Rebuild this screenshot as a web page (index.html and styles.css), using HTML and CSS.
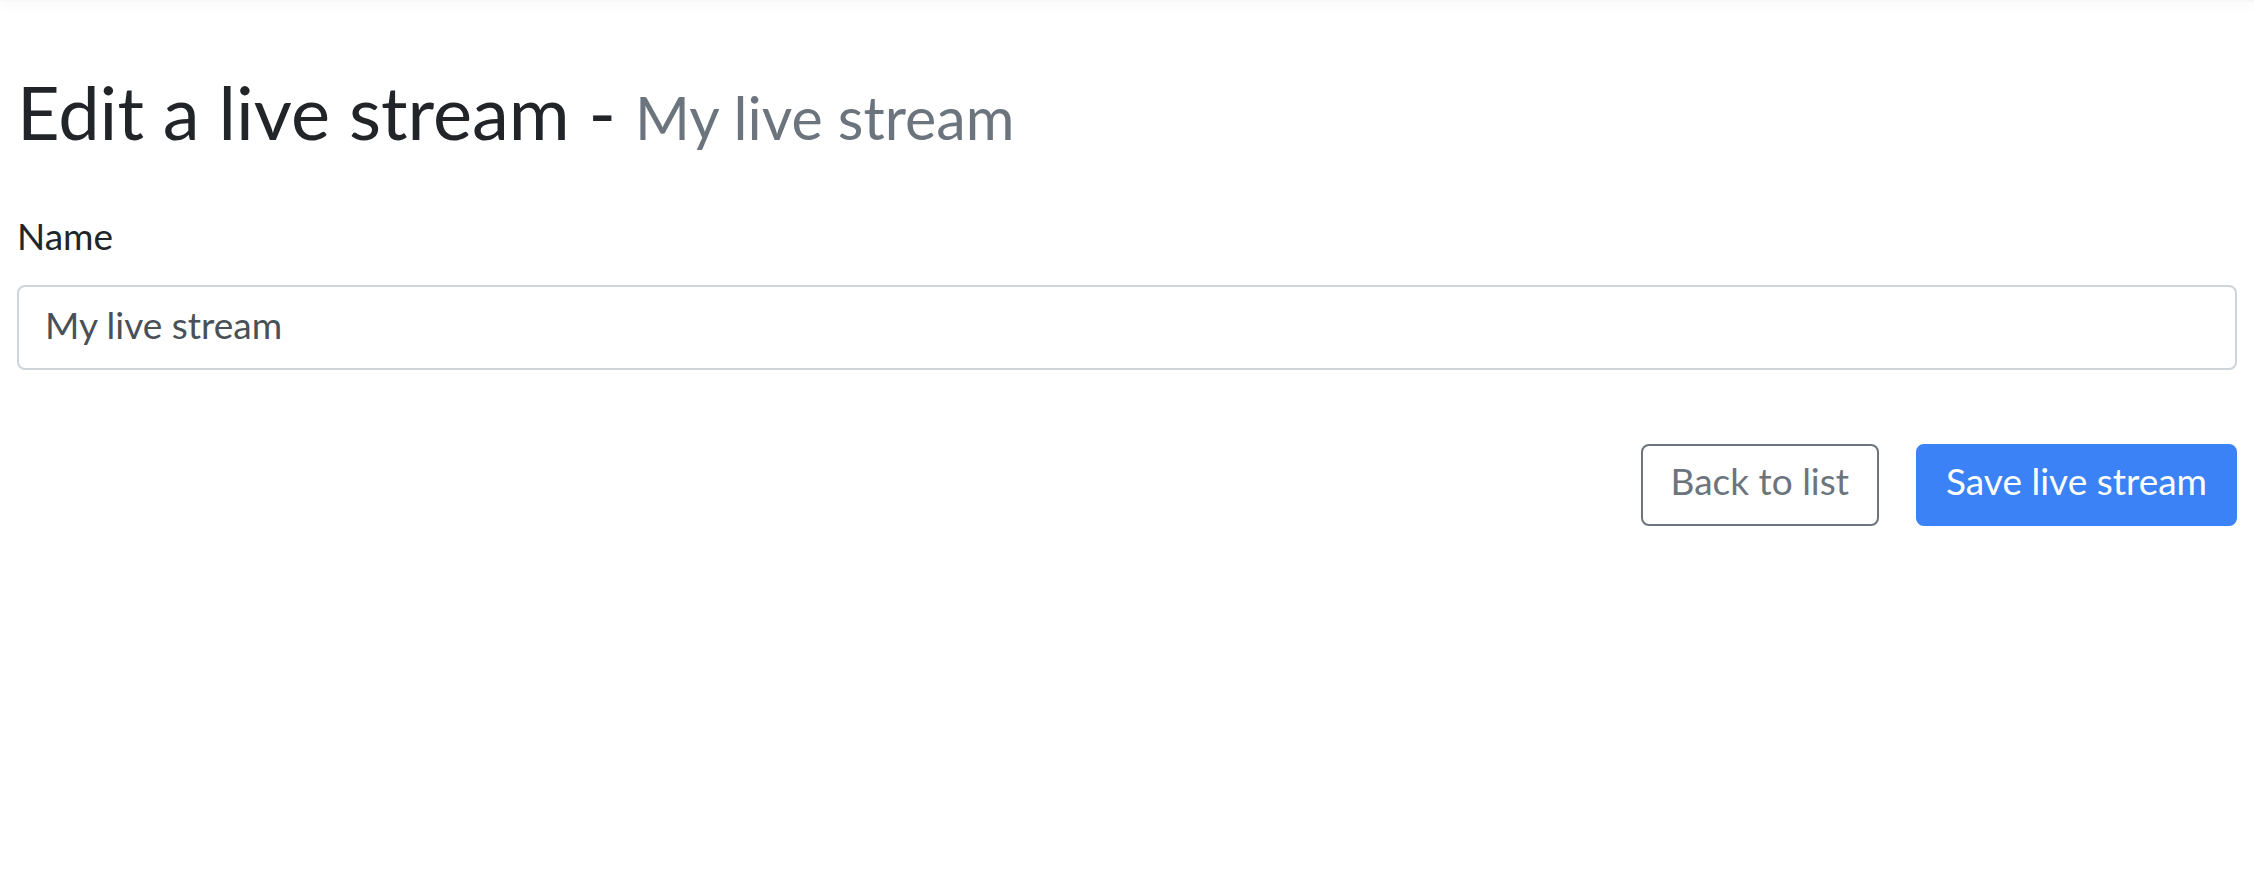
FILE: index.html
```html
<!DOCTYPE html>
<html lang="en">
<head>
<meta charset="utf-8">
<title>Edit a live stream</title>
<link rel="stylesheet" href="styles.css">
</head>
<body>
<header class="topbar"></header>
<main class="page">
  <h1 class="title">Edit a live stream - <small class="title-sub">My live stream</small></h1>
  <form class="form">
    <div class="field">
      <label class="label" for="name">Name</label>
      <input class="input" id="name" type="text" value="My live stream">
    </div>
    <div class="actions">
      <a class="btn btn-outline" href="#">Back to list</a>
      <button class="btn btn-primary" type="button">Save live stream</button>
    </div>
  </form>
</main>
</body>
</html>
```

FILE: styles.css
```css
* { box-sizing: border-box; }
html, body { margin: 0; padding: 0; background: #fff; }
body {
  font-family: Lato, "Noto Sans", sans-serif;
  font-size: 37px;
  line-height: 1.5;
  color: #212529;
}
.topbar {
  height: 2px;
  background: #f7f7f7;
  box-shadow: 0 3px 9px rgba(0, 0, 0, 0.09);
}
.page {
  padding: 66px 17px 0 17px;
}
.title {
  margin: 0 0 51px 0;
  font-size: 74px;
  font-weight: 400;
  line-height: 1.2;
  color: #212529;
}
.title-sub {
  font-size: 80%;
  color: #6c757d;
}
.field {
  display: flex;
  flex-direction: column;
}
.label {
  margin-bottom: 22px;
  color: #212529;
}
.input {
  height: 85px;
  padding: 0 26px 7px 26px;
  font: inherit;
  color: #495057;
  border: 2px solid #ced4da;
  border-radius: 8px;
  background: #fff;
  outline: none;
}
.actions {
  display: flex;
  justify-content: flex-end;
  gap: 37px;
  margin-top: 74px;
}
.btn {
  display: inline-flex;
  align-items: center;
  justify-content: center;
  height: 82px;
  padding: 0 28px 10px 28px;
  font: inherit;
  border-radius: 8px;
  border: 2px solid transparent;
  text-decoration: none;
  cursor: pointer;
}
.btn-outline {
  color: #6c757d;
  border-color: #6c757d;
  background: #fff;
}
.btn-primary {
  color: #fff;
  background: #3b82f6;
  border-color: #3b82f6;
}
```
